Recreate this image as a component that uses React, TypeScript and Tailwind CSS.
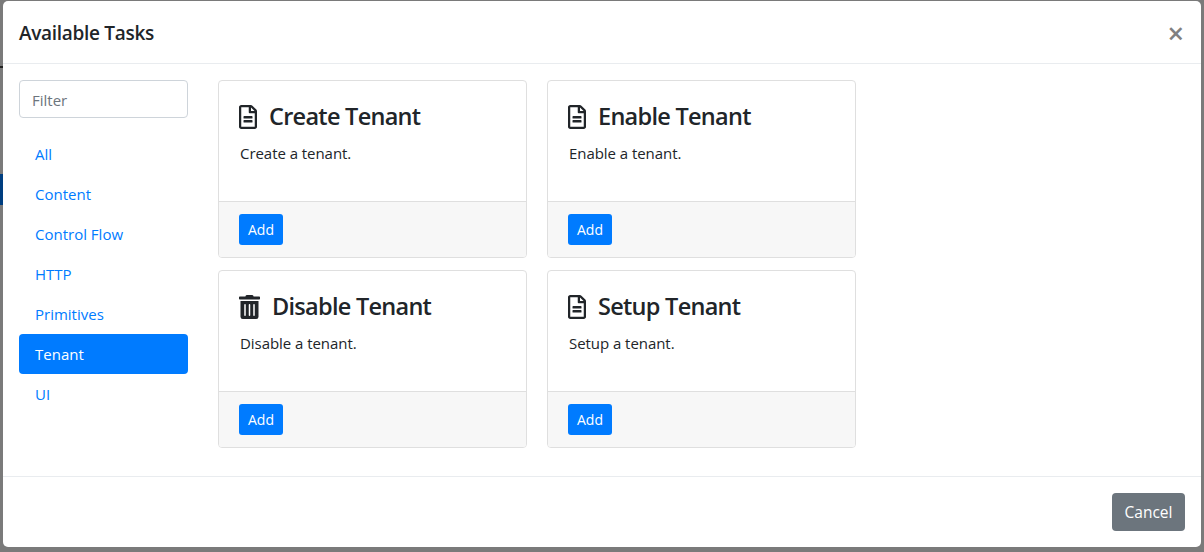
import React from "react";

const font = { fontFamily: '"Open Sans", "Noto Sans", sans-serif' };

function FileIcon() {
  return (
    <svg viewBox="0 0 384 512" className="w-[18px] h-[24px] fill-[#212529] shrink-0">
      <path d="M288 248v28c0 6.600-5.400 12-12 12H108c-6.600 0-12-5.400-12-12v-28c0-6.600 5.400-12 12-12h168c6.600 0 12 5.400 12 12zm-12 72H108c-6.600 0-12 5.400-12 12v28c0 6.600 5.400 12 12 12h168c6.600 0 12-5.400 12-12v-28c0-6.600-5.400-12-12-12zm108-188.100V464c0 26.500-21.500 48-48 48H48c-26.500 0-48-21.500-48-48V48C0 21.500 21.500 0 48 0h204.100C264.800 0 277 5.100 286 14.100L369.900 98c9 8.900 14.100 21.200 14.100 33.900zm-128-80V128h76.100L256 51.900zM336 464V176H232c-13.300 0-24-10.700-24-24V48H48v416h288z" />
    </svg>
  );
}

function TrashIcon() {
  return (
    <svg viewBox="0 0 448 512" className="w-[21px] h-[24px] fill-[#212529] shrink-0">
      <path d="M32 464a48 48 0 0 0 48 48h288a48 48 0 0 0 48-48V128H32zm272-256a16 16 0 0 1 32 0v224a16 16 0 0 1-32 0zm-96 0a16 16 0 0 1 32 0v224a16 16 0 0 1-32 0zm-96 0a16 16 0 0 1 32 0v224a16 16 0 0 1-32 0zM432 32H312l-9.400-18.700A24 24 0 0 0 281.100 0H166.800a23.720 23.720 0 0 0-21.400 13.300L136 32H16A16 16 0 0 0 0 48v32a16 16 0 0 0 16 16h416a16 16 0 0 0 16-16V48a16 16 0 0 0-16-16z" />
    </svg>
  );
}

function Card({ title, text, icon }: { title: string; text: string; icon: React.ReactNode }) {
  return (
    <div className="w-[309px] h-[178px] flex flex-col border border-[#dfdfdf] rounded-[4px] bg-white overflow-hidden">
      <div className="flex-1 px-5 pt-5">
        <div className="flex items-center gap-[12px] h-[32px] text-[23.5px] leading-[32px] font-[540] text-[#212529] tracking-[-0.72px]">
          {icon}
          <span className="-translate-y-[1px]">{title}</span>
        </div>
        <p className="mt-[8px] pl-[1px] text-[15px] leading-[24px] tracking-[-0.05px] text-[#212529]">{text}</p>
      </div>
      <div className="h-[56px] border-t border-[#dfdfdf] bg-[#f7f7f7] px-5 pt-3">
        <button className="h-[31px] w-[44px] rounded-[3px] bg-[#007bff] text-white text-[14px] leading-[31px] text-center">Add</button>
      </div>
    </div>
  );
}

const items = ["All", "Content", "Control Flow", "HTTP", "Primitives", "Tenant", "UI"];

export default function App() {
  return (
    <div style={font} className="relative h-[552px] w-[1204px] overflow-hidden bg-[#7a7a7a] pl-[3px] pr-[3px] pt-[1px]">
      <div className="absolute left-0 top-[174px] h-[31px] w-[3px] bg-[#003e80]" />
      <div className="absolute left-0 top-[66px] h-[2px] w-[3px] bg-[#222222]" />
      <div className="flex h-[546px] w-[1198px] flex-col rounded-[5px] bg-white">
        <div className="flex h-[63px] items-center justify-between border-b border-[#e9ecef] pl-4 pr-[17px]">
          <h5 className="translate-y-[1px] text-[19px] font-[540] tracking-[-0.3px] text-[#212529]">Available Tasks</h5>
          <span className="text-[29px] font-semibold leading-none text-[#808080]">×</span>
        </div>
        <div className="flex h-[412px] pl-4 pt-4">
          <div className="w-[169px] shrink-0">
            <div className="flex h-[38px] items-center rounded-[4px] border border-[#ced4da] px-3 text-[15px] leading-[38px] text-[#6c757d]"><span className="translate-y-[1px]">Filter</span></div>
            <div className="mt-4 flex flex-col">
              {items.map((it) => (
                <div key={it} className={"h-[40px] rounded-[4px] px-4 text-[15px] leading-[40px] " + (it === "Tenant" ? "bg-[#007bff] text-white" : "text-[#007bff]")}>{it}</div>
              ))}
            </div>
          </div>
          <div className="ml-[30px] grid grid-cols-[309px_309px] gap-x-5 gap-y-3 content-start">
            <Card title="Create Tenant" text="Create a tenant." icon={<FileIcon />} />
            <Card title="Enable Tenant" text="Enable a tenant." icon={<FileIcon />} />
            <Card title="Disable Tenant" text="Disable a tenant." icon={<TrashIcon />} />
            <Card title="Setup Tenant" text="Setup a tenant." icon={<FileIcon />} />
          </div>
        </div>
        <div className="flex flex-1 items-center justify-end border-t border-[#e9ecef] pr-4">
          <button className="h-[38px] w-[73px] rounded-[4px] bg-[#6c757d] pt-[1px] text-[15.5px] text-white">Cancel</button>
        </div>
      </div>
    </div>
  );
}
